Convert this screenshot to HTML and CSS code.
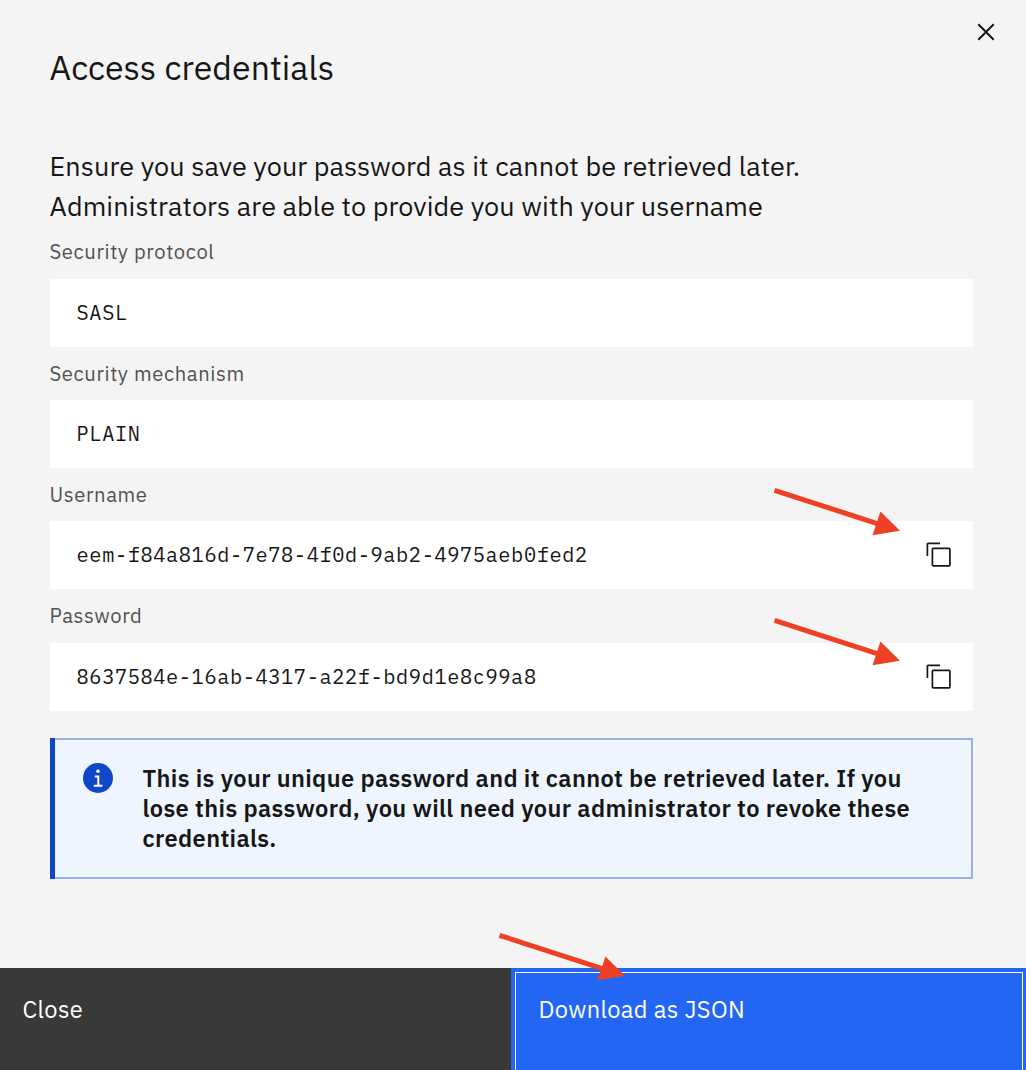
FILE: index.html
```html
<!DOCTYPE html>
<html lang="en">
<head>
<meta charset="utf-8">
<title>Access credentials</title>
<link rel="stylesheet" href="styles.css">
</head>
<body>
<main class="modal">
  <header class="modal-header">
    <h1 class="title">Access credentials</h1>
    <button class="close-icon" aria-label="Close dialog">
      <svg width="18" height="18" viewBox="0 0 18 18"><path d="M1.3 1.3 16.7 16.7M16.7 1.3 1.3 16.7"/></svg>
    </button>
  </header>
  <section class="content">
    <p class="intro">Ensure you save your password as it cannot be retrieved later.<br>Administrators are able to provide you with your username</p>
    <div class="fields">
      <div class="field"><div class="label">Security protocol</div><div class="value"><code>SASL</code></div></div>
      <div class="field"><div class="label label-mechanism">Security mechanism</div><div class="value"><code>PLAIN</code></div></div>
      <div class="field"><div class="label">Username</div><div class="value"><code>eem-f84a816d-7e78-4f0d-9ab2-4975aeb0fed2</code>
        <svg class="copy" width="26" height="26" viewBox="0 0 26 26"><path d="M1.4 14V2.1Q1.4 1.3 2.2 1.3H14"/><rect x="6.4" y="6.4" width="17.5" height="17.5" rx="0.9"/></svg></div></div>
      <div class="field"><div class="label">Password</div><div class="value"><code>8637584e-16ab-4317-a22f-bd9d1e8c99a8</code>
        <svg class="copy" width="26" height="26" viewBox="0 0 26 26"><path d="M1.4 14V2.1Q1.4 1.3 2.2 1.3H14"/><rect x="6.4" y="6.4" width="17.5" height="17.5" rx="0.9"/></svg></div></div>
    </div>
    <div class="notice">
      <svg class="info" width="30" height="30" viewBox="0 0 30 30"><circle class="info-disc" cx="15" cy="15" r="15"/><circle class="info-dot" cx="15" cy="8.2" r="1.8"/><path class="info-stem" d="M11.8 13.6H15.3V22.7M10.8 22.7H19.4"/></svg>
      <p class="notice-text">This is your unique password and it cannot be retrieved later. If you<br>lose this password, you will need your administrator to revoke these<br>credentials.</p>
    </div>
  </section>
  <footer class="actions">
    <button class="action secondary">Close</button>
    <button class="action primary">Download as JSON</button>
  </footer>
  <svg class="arrows" width="1026" height="1070" viewBox="0 0 1026 1070">
    <defs><g id="arrow"><path class="arrow-line" d="M774.5 490.3 878 523.8"/><path class="arrow-head" d="M900 530.8 880.4 511.6 872.5 535.2Z"/></g></defs>
    <use href="#arrow"/><use href="#arrow" y="130"/><use href="#arrow" x="-275" y="445"/>
  </svg>
</main>
</body>
</html>
```
FILE: styles.css
```css
* { box-sizing: border-box; }
body { margin: 0; background: #f4f4f4; color: #161616; font-family: "IBM Plex Sans", Roboto, sans-serif; }
button { border: 0; padding: 0; font: inherit; text-align: left; }
.modal { position: relative; display: flex; flex-direction: column; height: 1070px; overflow: hidden; }
.modal-header { display: flex; justify-content: space-between; height: 146px; padding: 23px 31px 0 49.5px; }
.title { margin: 22px 0 0; font-size: 33.75px; font-weight: 400; line-height: 44px; letter-spacing: 0.08px; }
.close-icon { width: 18px; height: 18px; background: none; }
.close-icon svg { display: block; fill: none; stroke: #161616; stroke-width: 2; }
.content { flex: 1; padding: 0 53px 0 50px; }
.intro { margin: 0 0 0 -0.5px; font-size: 27px; line-height: 40px; letter-spacing: 0.09px; white-space: nowrap; }
.fields { display: grid; grid-template-rows: repeat(4, 121.33px); margin-top: 6px; }
.field { display: grid; grid-template-rows: 46.7px 68px; }
.label { margin-left: -0.5px; font-size: 20.25px; line-height: 40.6px; color: #525252; letter-spacing: 0.6px; }
.label-mechanism { padding-top: 1px; }
.value { display: flex; align-items: center; justify-content: space-between; padding: 0 21px 0 26.6px; background: #fff; }
.value code { font: 20.25px/28px "IBM Plex Mono", "Liberation Mono", monospace; letter-spacing: 0.63px; }
.copy { fill: none; stroke: #161616; stroke-width: 1.7; }
.notice { position: relative; display: flex; gap: 29.5px; height: 141px; margin-top: 21px; padding: 23px 20px 0 33px; border: solid #97b1eb; border-width: 2px 2px 2px 0; background: #eef5ff; }
.notice::before { content: ""; position: absolute; top: -2px; bottom: -2px; left: 0; width: 5px; background: #1046c8; }
.info-disc { fill: #1046c8; }
.info-dot { fill: #fff; }
.info-stem { fill: none; stroke: #fff; stroke-width: 2; }
.notice-text { margin: 0; font-size: 23.63px; line-height: 30px; font-weight: 600; letter-spacing: 0.36px; white-space: nowrap; }
.actions { display: grid; grid-template-columns: 511px 1fr; height: 102px; font-size: 23.63px; line-height: 32px; }
.action { display: flex; padding: 25px 22.5px; color: #fff; letter-spacing: 0.35px; }
.secondary { background: #393939; }
.primary { padding: 21px 23.5px; border: 4px solid #2466f4; border-width: 4px 3px 0 4px; background: #2466f4; box-shadow: inset 1px 1px #fff, inset -1px 0 #fff; }
.arrows { position: absolute; inset: 0; pointer-events: none; }
.arrow-line { fill: none; stroke: #ed4024; stroke-width: 5; }
.arrow-head { fill: #ed4024; }
```
